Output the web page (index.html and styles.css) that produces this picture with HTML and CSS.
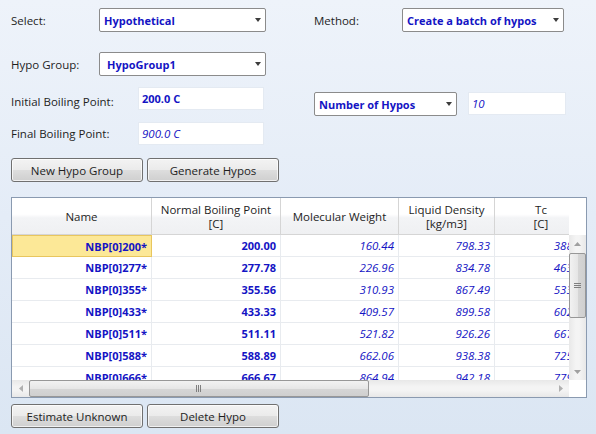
FILE: index.html
```html
<!DOCTYPE html>
<html>
<head>
<meta charset="utf-8">
<link rel="stylesheet" href="styles.css">
</head>
<body>
<div class="page">
  <div class="row row1">
    <div class="lbl lbl-w">Select:</div>
    <div class="dd dd-select"><span class="dd-text">Hypothetical</span><span class="caret"></span></div>
    <div class="lbl lbl-method">Method:</div>
    <div class="dd dd-method"><span class="dd-text">Create a batch of hypos</span><span class="caret"></span></div>
  </div>
  <div class="row row2">
    <div class="lbl lbl-w">Hypo Group:</div>
    <div class="dd dd-select"><span class="dd-text pad8">HypoGroup1</span><span class="caret"></span></div>
  </div>
  <div class="row row3">
    <div class="lbl lbl-w2 low6">Initial Boiling Point:</div>
    <div class="field bold">200.0 C</div>
    <div class="right-group">
      <div class="dd dd-num"><span class="dd-text">Number of Hypos</span><span class="caret"></span></div>
      <div class="field field-num ital">10</div>
    </div>
  </div>
  <div class="row row4">
    <div class="lbl lbl-w2 low3">Final Boiling Point:</div>
    <div class="field ital">900.0 C</div>
  </div>
  <div class="row row5">
    <div class="btn">New Hypo Group</div>
    <div class="btn">Generate Hypos</div>
  </div>

  <div class="grid">
    <div class="grid-main">
      <div class="viewport">
        <div class="hdr">
          <div class="hc c1">Name</div>
          <div class="hc c2">Normal Boiling Point<br>[C]</div>
          <div class="hc c3">Molecular Weight</div>
          <div class="hc c4">Liquid Density<br>[kg/m3]</div>
          <div class="hc c5">Tc<br>[C]</div>
        </div>
        <div class="body">
          <div class="tr"><div class="td c1 name sel">NBP[0]200*</div><div class="td c2 b">200.00</div><div class="td c3 i">160.44</div><div class="td c4 i">798.33</div><div class="td c5 i">388.5</div></div>
          <div class="tr"><div class="td c1 name">NBP[0]277*</div><div class="td c2 b">277.78</div><div class="td c3 i">226.96</div><div class="td c4 i">834.78</div><div class="td c5 i">463.5</div></div>
          <div class="tr"><div class="td c1 name">NBP[0]355*</div><div class="td c2 b">355.56</div><div class="td c3 i">310.93</div><div class="td c4 i">867.49</div><div class="td c5 i">533.5</div></div>
          <div class="tr"><div class="td c1 name">NBP[0]433*</div><div class="td c2 b">433.33</div><div class="td c3 i">409.57</div><div class="td c4 i">899.58</div><div class="td c5 i">602.1</div></div>
          <div class="tr"><div class="td c1 name">NBP[0]511*</div><div class="td c2 b">511.11</div><div class="td c3 i">521.82</div><div class="td c4 i">926.26</div><div class="td c5 i">667.4</div></div>
          <div class="tr"><div class="td c1 name">NBP[0]588*</div><div class="td c2 b">588.89</div><div class="td c3 i">662.06</div><div class="td c4 i">938.38</div><div class="td c5 i">725.5</div></div>
          <div class="tr"><div class="td c1 name">NBP[0]666*</div><div class="td c2 b">666.67</div><div class="td c3 i">864.94</div><div class="td c4 i">942.18</div><div class="td c5 i">779.5</div></div>
        </div>
      </div>
      <div class="vcol">
        <div class="vtop"></div>
        <div class="vscroll">
          <div class="sarrow"><svg width="7" height="4" viewBox="0 0 7 4"><path d="M0 4 L3.5 0 L7 4 Z" fill="#a0a0a0"/></svg></div>
          <div class="vtrack">
            <div class="vthumb"><svg width="7" height="6" viewBox="0 0 7 6"><path d="M0 0.5h7M0 2.5h7M0 4.5h7" stroke="#7f7f7f" stroke-width="1"/></svg></div>
          </div>
          <div class="sarrow"><svg width="7" height="4" viewBox="0 0 7 4"><path d="M0 0 L7 0 L3.5 4 Z" fill="#a0a0a0"/></svg></div>
        </div>
      </div>
    </div>
    <div class="hbar">
      <div class="hscroll">
        <div class="harrow"><svg width="4" height="7" viewBox="0 0 4 7"><path d="M4 0 L0 3.5 L4 7 Z" fill="#b0b0b0"/></svg></div>
        <div class="htrack">
          <div class="hthumb"><svg width="6" height="7" viewBox="0 0 6 7"><path d="M0.5 0v7M2.5 0v7M4.5 0v7" stroke="#7f7f7f" stroke-width="1"/></svg></div>
        </div>
        <div class="harrow"><svg width="4" height="7" viewBox="0 0 4 7"><path d="M0 0 L4 3.5 L0 7 Z" fill="#b0b0b0"/></svg></div>
      </div>
      <div class="corner"></div>
    </div>
  </div>

  <div class="row row6">
    <div class="btn">Estimate Unknown</div>
    <div class="btn">Delete Hypo</div>
  </div>
</div>
</body>
</html>
```

FILE: styles.css
```css
* { box-sizing: border-box; }
html, body { margin: 0; padding: 0; }
body {
  width: 596px;
  height: 434px;
  overflow: hidden;
  background: linear-gradient(to bottom, #eef3fa 0%, #e4ecf7 50%, #dbe6f3 100%);
  font-family: "Open Sans", "Noto Sans", sans-serif;
  font-size: 11.5px;
  color: #1e1e1e;
}
.page {
  padding-left: 11px;
  display: flex;
  flex-direction: column;
}
.row { display: flex; align-items: center; }
.row1 { margin-top: 8px; height: 24px; }
.row2 { margin-top: 20px; height: 24px; }
.row3 { margin-top: 11px; height: 23px; align-items: flex-start; }
.row4 { margin-top: 12px; height: 23px; align-items: flex-start; }
.row5 { margin-top: 13px; height: 24px; gap: 4px; }
.row6 { margin-top: 6px; height: 24px; gap: 4px; }

.lbl { white-space: nowrap; }
.lbl-w { width: 88px; }
.lbl-w2 { width: 127px; }
.low6 { padding-top: 7px; }
.low3 { padding-top: 4px; }
.lbl-method { margin-left: 48px; width: 88px; }

.dd {
  height: 24px;
  background: #fff;
  border: 1px solid #8b8b8b;
  border-radius: 2px;
  display: flex;
  align-items: center;
  justify-content: space-between;
  padding: 0 4px 0 4px;
}
.dd-select { width: 167px; }
.dd-method { width: 162px; }
.dd-num { width: 143px; }
.dd-text {
  font-weight: bold;
  color: #1414c4;
  white-space: nowrap;
  font-size: 11px;
}
.pad8 { padding-left: 3px; }
.caret {
  width: 0; height: 0;
  border-left: 3.5px solid transparent;
  border-right: 3.5px solid transparent;
  border-top: 4px solid #3c3c3c;
}

.field {
  width: 126px;
  height: 23px;
  background: #fff;
  border: 1px solid #e4eaf2;
  color: #1414c4;
  display: flex;
  align-items: center;
  padding-left: 3px;
  white-space: nowrap;
}
.bold { font-weight: bold; font-size: 11px; }
.ital { font-style: italic; }
.right-group {
  display: flex;
  margin-left: 50px;
  margin-top: 5px;
  gap: 11px;
}
.field-num { width: 98px; }

.btn {
  width: 132px;
  height: 24px;
  border: 1px solid #707070;
  border-radius: 3px;
  background: linear-gradient(to bottom, #f3f3f3 0%, #ebebeb 48%, #dddddd 52%, #cfcfcf 100%);
  box-shadow: inset 0 0 0 1px rgba(255,255,255,0.7);
  display: flex;
  align-items: center;
  justify-content: center;
  color: #1e1e1e;
  white-space: nowrap;
}

.grid {
  margin-top: 15px;
  width: 576px;
  height: 201px;
  border: 1px solid #8a9ab0;
  background: #fff;
  display: flex;
  flex-direction: column;
}
.grid-main { display: flex; height: 182px; }
.viewport { width: 557px; overflow: hidden; }
.hdr { display: flex; height: 37px; width: 600px; }
.hc {
  height: 37px;
  border-right: 1px solid #d5d5d5;
  border-bottom: 1px solid #d5d5d5;
  background: linear-gradient(to bottom, #ffffff 0%, #ffffff 45%, #f3f4f6 55%, #eff0f2 100%);
  display: flex;
  align-items: center;
  justify-content: center;
  text-align: center;
  line-height: 14px;
  color: #1e1e1e;
  padding-top: 1px;
}
.c1 { width: 140px; flex: none; }
.c2 { width: 129px; flex: none; }
.c3 { width: 118px; flex: none; }
.c4 { width: 96px; flex: none; }
.c5 { width: 92px; flex: none; }
.hc.c5 { border-right: none; }

.body { width: 600px; }
.tr { display: flex; height: 22px; }
.td {
  height: 22px;
  border-right: 1px solid #e8ebef;
  border-bottom: 1px solid #e8ebef;
  display: flex;
  align-items: center;
  justify-content: flex-end;
  padding-right: 4px;
  color: #1414c4;
  white-space: nowrap;
}
.td.name { font-weight: bold; font-size: 11px; padding-right: 4px; }
.td.b { font-weight: bold; font-size: 11px; }
.td.i { font-style: italic; }
.td.sel {
  background: #fce897;
  border: 1px solid #e8c65e;
}

.vcol { width: 17px; display: flex; flex-direction: column; }
.vtop { height: 37px; background: #fff; }
.vscroll {
  flex: 1;
  display: flex;
  flex-direction: column;
  background: linear-gradient(to right, #e8e8e8, #f4f4f4 40%, #f4f4f4 60%, #e8e8e8);
}
.sarrow {
  height: 17px;
  display: flex;
  align-items: center;
  justify-content: center;
}
.vtrack { flex: 1; }
.vthumb {
  margin: 1px 0 0 0;
  width: 17px;
  height: 65px;
  border: 1px solid #979797;
  border-radius: 2px;
  background: linear-gradient(to right, #f2f2f2, #e6e6e6 50%, #d6d6d6 51%, #cfcfcf);
  display: flex;
  align-items: center;
  justify-content: center;
}

.hbar { display: flex; height: 17px; }
.hscroll {
  width: 557px;
  display: flex;
  background: linear-gradient(to bottom, #e8e8e8, #f4f4f4 40%, #f4f4f4 60%, #e8e8e8);
}
.harrow {
  width: 17px;
  display: flex;
  align-items: center;
  justify-content: center;
}
.htrack { flex: 1; }
.hthumb {
  width: 340px;
  height: 17px;
  border: 1px solid #979797;
  border-radius: 2px;
  background: linear-gradient(to bottom, #f2f2f2, #e6e6e6 50%, #d6d6d6 51%, #cfcfcf);
  display: flex;
  align-items: center;
  justify-content: center;
}
.corner { width: 17px; background: #fff; }
```
